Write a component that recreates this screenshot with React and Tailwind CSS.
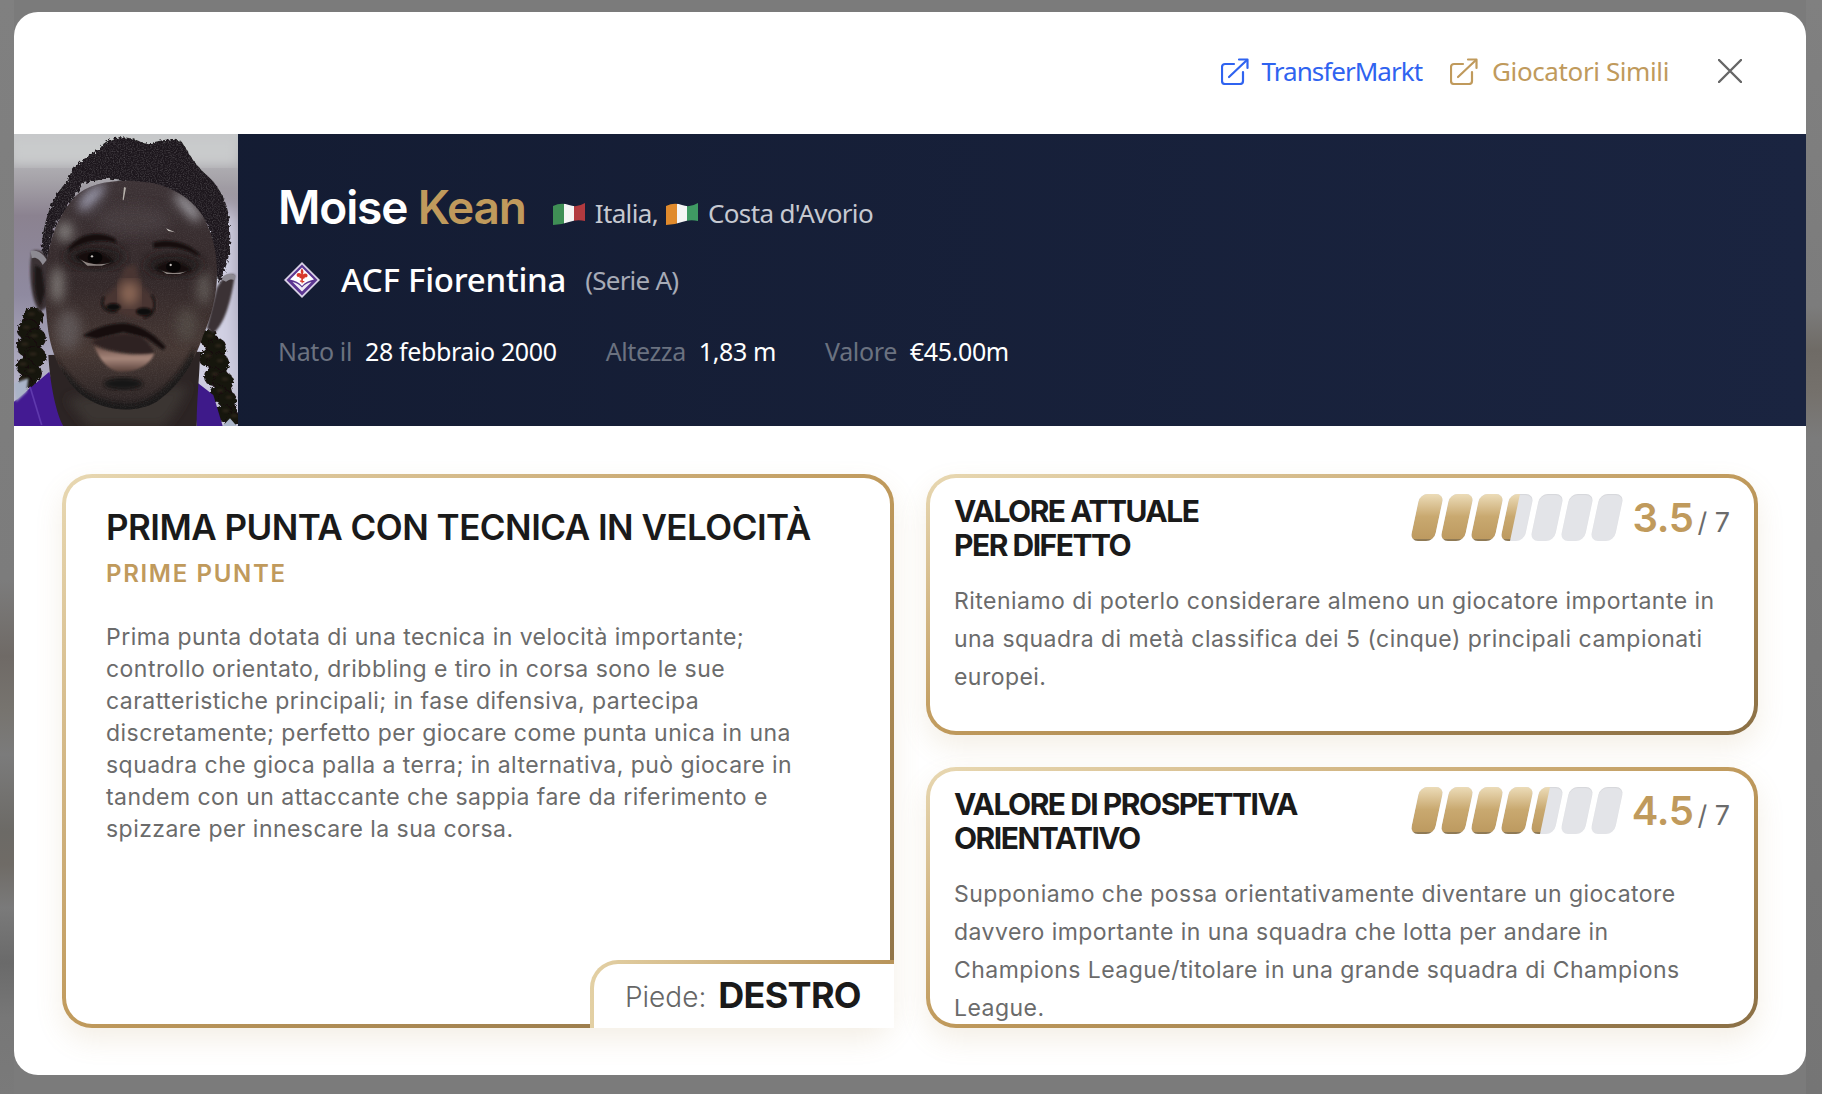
import React from "react";

const headingFont = "font-['Inter',sans-serif]";
const bodyFont = "font-['Inter',sans-serif]";
const navFont = "font-['Noto_Sans',sans-serif]";

const ExternalIcon = ({ className }) => (
  <svg viewBox="0 0 28 27" fill="none" stroke="currentColor" strokeWidth="2.2" strokeLinecap="round" strokeLinejoin="round" className={className}>
    <path d="M13 6H4a3 3 0 0 0-3 3v14a3 3 0 0 0 3 3h15a3 3 0 0 0 3-3v-9" />
    <path d="M8 19 26 2" />
    <path d="M18 1.500h8.500V10" />
  </svg>
);

const Flag = ({ id, colors }) => (
  <svg viewBox="0 0 32 23" className="h-[23px] w-8 shrink-0">
    <clipPath id={id}>
      <path d="M0 4Q8 0 16 3T32 1V19Q24 17 16 20T0 23Z" />
    </clipPath>
    <g clipPath={`url(#${id})`}>
      <rect x="0" y="0" width="11" height="23" fill={colors[0]} />
      <rect x="11" y="0" width="10" height="23" fill={colors[1]} />
      <rect x="21" y="0" width="11" height="23" fill={colors[2]} />
    </g>
  </svg>
);

const ClubLogo = () => (
  <svg viewBox="0 0 36 36" className="h-9 w-9 shrink-0">
    <path d="M18 0 36 18 18 36 0 18Z" fill="#d9d2e6" />
    <path d="M18 2.500 33.500 18 18 33.500 2.500 18Z" fill="#5b3590" />
    <path d="M18 5.500 30 17.500 C25 18.500 21 20 18 24 C15 20 11 18.500 6 17.500Z" fill="#fff" />
    <path d="M18 6.500c1.500 2 2 3.500 .8 6 2-1.800 4.800-1.200 4.800 1 0 1.700-1.600 2.400-2.800 1.600 .4 1.600-.8 1.900-1.800 1.600l-.2 2.300h1.500v1.200h-1.500L18 22l-.6-2.300h-1.500v-1.200h1.500l-.2-2.300c-1 .3-2.200 0-1.800-1.600-1.200 .8-2.800 .1-2.800-1.600 0-2.200 2.800-2.800 4.800-1-1.200-2.500-.7-4 .8-6Z" fill="#d8392b" />
    <path d="M18 25.500c2.500-3 5.500-4.500 9.500-5.500L18 29.500 8.500 20c4 1 7 2.500 9.500 5.500Z" fill="#fff" opacity=".9" />
  </svg>
);

const hairPath =
  "M125 375C128 300 150 220 205 165C215 120 270 90 300 70C325 30 385 28 430 55C470 58 500 30 545 50C570 90 590 125 620 150C665 190 692 250 690 320C695 380 680 430 655 475L625 300 510 192 320 160 250 175 165 300 140 400Z";
const facePath =
  "M140 420C148 340 175 270 225 215C270 170 360 160 440 172C510 180 575 220 610 275C635 320 648 370 650 420C655 490 640 560 610 630C580 720 540 780 470 830C410 865 320 860 260 820C200 780 160 710 145 620C135 550 135 480 140 420Z";

const leftBraid = [[100, 575, 30], [85, 615, 32], [108, 640, 30], [80, 665, 30], [105, 695, 32], [75, 725, 26], [100, 745, 26], [75, 770, 20]];
const rightBraid = [[625, 640, 26], [650, 670, 30], [620, 700, 24], [655, 715, 32], [640, 755, 28], [670, 770, 30], [655, 805, 26], [682, 825, 28], [672, 865, 26], [698, 880, 20]];

// ritratto disegnato: coordinate prese dal crop del riferimento
const Portrait = () => (
  <svg viewBox="42 27 672 876" preserveAspectRatio="none" className="h-full w-full">
    <defs>
      <linearGradient id="bgTone" x1="0" y1="0" x2="0" y2="1">
        <stop offset="0" stopColor="#c4c6c8" />
        <stop offset=".16" stopColor="#a5a2a8" />
        <stop offset=".28" stopColor="#8b8290" />
        <stop offset=".55" stopColor="#8f8aa0" />
        <stop offset="1" stopColor="#c9c8dc" />
      </linearGradient>
      <linearGradient id="skinTone" x1="0" y1="0" x2="0" y2="1">
        <stop offset="0" stopColor="#3d3336" />
        <stop offset=".45" stopColor="#34292a" />
        <stop offset=".75" stopColor="#463834" />
        <stop offset="1" stopColor="#2a2324" />
      </linearGradient>
      <linearGradient id="lipTone" x1="0" y1="0" x2="0" y2="1">
        <stop offset="0" stopColor="#6e524a" />
        <stop offset=".5" stopColor="#a6867a" />
        <stop offset="1" stopColor="#5a423c" />
      </linearGradient>
      <clipPath id="hairClip"><path d={hairPath} /></clipPath>
      <clipPath id="faceClip"><path d={facePath} /></clipPath>
      <filter id="b2"><feGaussianBlur stdDeviation="3" /></filter>
      <filter id="b6"><feGaussianBlur stdDeviation="7" /></filter>
      <filter id="b14"><feGaussianBlur stdDeviation="16" /></filter>
      <filter id="b28"><feGaussianBlur stdDeviation="30" /></filter>
      <filter id="fuzz" x="-10%" y="-10%" width="120%" height="120%">
        <feTurbulence type="fractalNoise" baseFrequency=".12" numOctaves="2" seed="4" />
        <feDisplacementMap in="SourceGraphic" scale="16" />
      </filter>
      <filter id="grain" x="0" y="0" width="100%" height="100%">
        <feTurbulence type="fractalNoise" baseFrequency=".28" numOctaves="2" seed="7" />
        <feColorMatrix values="0 0 0 0 1 0 0 0 0 1 0 0 0 0 1 0 0 0 2.200 -0.900" />
      </filter>
    </defs>
    <rect x="42" y="27" width="672" height="876" fill="url(#bgTone)" />
    <rect x="560" y="250" width="160" height="560" fill="#d2d1e4" filter="url(#b28)" />
    <rect x="30" y="30" width="684" height="90" fill="#c9cbcc" filter="url(#b14)" />

    {/* treccine */}
    <g filter="url(#fuzz)" fill="#17120f">
      <path d="M100 560 85 790" stroke="#17120f" strokeWidth="44" />
      <path d="M625 620 700 900" stroke="#17120f" strokeWidth="44" />
      {leftBraid.map(([x, y, r]) => <circle key={`${x}-${y}`} cx={x} cy={y} r={r} />)}
      {rightBraid.map(([x, y, r]) => <circle key={`${x}-${y}`} cx={x} cy={y} r={r} />)}
    </g>
    <g fill="#4d3a2e" opacity=".4" filter="url(#b2)">
      {leftBraid.map(([x, y]) => <ellipse key={`${x}-${y}`} cx={x - 6} cy={y - 8} rx="11" ry="5" />)}
      {rightBraid.map(([x, y]) => <ellipse key={`${x}-${y}`} cx={x + 5} cy={y - 8} rx="10" ry="5" />)}
    </g>

    {/* maglia */}
    <path d="M42 830 148 740 195 903H42Z" fill="#431a92" />
    <path d="M575 760 640 810 668 903H590Z" fill="#3e1a8a" />
    <path d="M90 785 125 900" stroke="#5f39ad" strokeWidth="5" fill="none" />
    <path d="M42 775 85 760 80 800 48 830Z" fill="#aab4c8" filter="url(#b2)" />
    <path d="M668 903 690 880 710 903Z" fill="#aab4c8" />

    {/* orecchie */}
    <path d="M95 380C85 440 92 530 120 560L150 540 150 400C135 380 110 370 95 380Z" fill="#3a3134" filter="url(#b2)" />
    <path d="M705 450C680 440 660 470 650 490L620 610 640 625C680 590 695 510 705 450Z" fill="#3a3134" filter="url(#b2)" />
    <path d="M92 378C110 372 130 385 140 405L128 420C118 400 105 395 95 400Z" fill="#8d8a92" />
    <path d="M706 452C690 442 672 448 662 462L678 470C688 462 696 462 704 465Z" fill="#8d8a92" />
    <path d="M105 420C100 470 105 520 122 545L135 500 125 430Z" fill="#1e1919" filter="url(#b2)" />

    {/* collo */}
    <path d="M145 690C150 780 170 870 190 903H590C590 820 600 740 600 680Z" fill="#2c2424" />
    <path d="M200 820C230 860 250 885 265 903H490C530 860 550 820 565 780Z" fill="#3a3533" filter="url(#b14)" />

    {/* capelli */}
    <path d={hairPath} fill="#1b191b" filter="url(#fuzz)" />
    <g clipPath="url(#hairClip)">
      <rect x="100" y="20" width="620" height="470" filter="url(#grain)" opacity=".18" />
    </g>

    {/* viso */}
    <path d={facePath} fill="url(#skinTone)" />
    <g clipPath="url(#faceClip)">
      {/* luci pelle */}
      <g filter="url(#b14)">
        <path d="M235 245C245 205 285 180 320 172L300 215 250 262Z" fill="#9e9db0" />
        <path d="M520 200C560 210 590 245 605 285L580 285 535 235Z" fill="#a9a7ad" />
        <ellipse cx="195" cy="320" rx="24" ry="30" fill="#807c7a" />
        <ellipse cx="172" cy="480" rx="20" ry="55" fill="#7a7572" />
        <ellipse cx="612" cy="490" rx="20" ry="50" fill="#5f5855" />
        <ellipse cx="205" cy="615" rx="38" ry="60" fill="#5c5352" />
        <ellipse cx="560" cy="600" rx="32" ry="50" fill="#4f4643" />
        <ellipse cx="400" cy="285" rx="110" ry="45" fill="#443a3e" />
      </g>
      {/* ombre occhi */}
      <ellipse cx="285" cy="395" rx="90" ry="38" fill="#1a1516" filter="url(#b14)" opacity=".8" />
      <ellipse cx="520" cy="420" rx="85" ry="36" fill="#1a1516" filter="url(#b14)" opacity=".8" />
      {/* barba */}
      <path d="M165 690C220 790 300 840 400 835C470 825 540 750 585 660L575 820C480 880 320 890 220 840Z" fill="#151212" filter="url(#b6)" opacity=".8" />
      <rect x="120" y="150" width="560" height="720" filter="url(#grain)" opacity=".06" />
    </g>
    <path d="M372 186 378 188 371 226 368 224Z" fill="#b7b2ac" />
    <path d="M498 310 525 322 505 318Z" fill="#c9c4c0" />

    {/* sopracciglia */}
    <g filter="url(#b2)" fill="#14100f">
      <path d="M205 370C240 325 290 315 345 340L350 355C300 340 250 350 205 380Z" />
      <path d="M460 352C500 342 560 345 600 390L590 392C550 365 500 365 460 370Z" />
    </g>
    {/* occhi */}
    <g filter="url(#b2)">
      <path d="M228 395C255 370 305 370 340 410C305 425 255 425 228 395Z" fill="#120e0d" />
      <path d="M465 430C490 405 540 400 575 435C540 450 490 450 465 430Z" fill="#120e0d" />
    </g>
    <ellipse cx="285" cy="398" rx="22" ry="18" fill="#070505" />
    <ellipse cx="520" cy="425" rx="22" ry="17" fill="#070505" />
    <path d="M240 402C262 420 310 422 335 412L305 422H262Z" fill="#8e8582" />
    <path d="M478 432C495 446 540 448 568 436L540 447H500Z" fill="#8e8582" />
    <circle cx="276" cy="394" r="3.500" fill="#c9c4c0" />
    <circle cx="512" cy="420" r="3.500" fill="#c9c4c0" />

    {/* naso */}
    <path d="M375 425C360 470 345 495 315 512C298 540 318 566 350 560C380 575 410 585 440 575C472 568 472 530 452 508C425 490 410 450 408 420Z" fill="#4a3630" filter="url(#b6)" />
    <ellipse cx="388" cy="505" rx="30" ry="38" fill="#8a6655" filter="url(#b14)" />
    <path d="M312 515C296 545 320 566 352 558" fill="none" stroke="#151010" strokeWidth="6" filter="url(#b2)" />
    <path d="M455 510C475 540 462 572 430 578" fill="none" stroke="#151010" strokeWidth="6" filter="url(#b2)" />
    <ellipse cx="340" cy="546" rx="22" ry="11" fill="#0d0908" filter="url(#b2)" />
    <ellipse cx="432" cy="560" rx="24" ry="12" fill="#0d0908" filter="url(#b2)" />

    {/* baffi e labbra */}
    <path d="M248 632C290 606 340 590 385 596C430 604 468 632 497 665L490 676 440 640 370 622 290 642Z" fill="#151111" filter="url(#b2)" />
    <path d="M275 652C315 628 380 622 420 634C440 646 455 665 463 684C400 692 320 678 275 652Z" fill="#2f2321" filter="url(#b2)" />
    <path d="M282 662C325 684 400 695 464 685C448 722 410 742 360 740C322 736 298 700 282 662Z" fill="url(#lipTone)" filter="url(#b2)" />
    <ellipse cx="370" cy="776" rx="58" ry="18" fill="#181313" filter="url(#b6)" />
  </svg>
);

const Rating = ({ value }) => (
  <div className="flex items-center">
    <div className="flex gap-[6px] pl-[5px] pr-1">
      {[0, 1, 2, 3, 4, 5, 6].map((i) => {
        const fill = Math.min(Math.max(value - i, 0), 1);
        return (
          <div key={i} className="relative h-[47px] w-6 -skew-x-[12deg] overflow-hidden rounded-lg bg-[#e3e4e8] shadow-[inset_0_1px_1px_rgba(0,0,0,0.06)]">
            <div
              className="absolute inset-y-0 left-0 border-b-2 border-[#8f7a55] bg-linear-to-b from-[#ecdcb8] via-[#c9a970] to-[#bd9a60]"
              style={{ width: `${fill === 1 ? 100 : fill * 80}%` }}
            />
          </div>
        );
      })}
    </div>
    <span className={`${headingFont} ml-[9px] text-[40px] leading-none font-semibold tracking-[-0.01em] text-[#c09a5c]`}>{value.toFixed(1)}</span>
    <span className={`${bodyFont} mt-[10px] ml-1 text-[27px] leading-none text-[#6b6b6b]`}>/ 7</span>
  </div>
);

const GoldCard = ({ className, children }) => (
  <div className={`relative rounded-[30px] bg-linear-to-br from-[#e8d8b2] via-[#c09a5c] to-[#8a6f45] p-1 shadow-[0_12px_28px_rgba(176,140,80,0.14)] ${className}`}>
    {children}
  </div>
);

const ValueCard = ({ title, value, text }) => (
  <GoldCard className="h-[261px]">
    <div className="h-full overflow-hidden rounded-[26px] bg-white px-6 pt-4">
      <div className="flex items-start justify-between">
        <h3 className={`${headingFont} w-[370px] text-[30px] leading-[34px] font-bold tracking-[-0.05em] text-[#1a1a1a]`}>{title}</h3>
        <Rating value={value} />
      </div>
      <p className={`${bodyFont} mt-5 text-[23px] leading-[38px] tracking-[0.02em] text-[#6b6b6b]`}>{text}</p>
    </div>
  </GoldCard>
);

export default function App() {
  return (
    <div className="relative flex h-[1094px] w-full overflow-hidden bg-[#7b7b7b] pt-3 pr-4 pb-[19px] pl-[14px]">
      <div className="absolute inset-y-0 left-0 w-[14px] bg-[linear-gradient(to_bottom,#808080_0%,#7c7c7c_53%,#6f6a66_60%,#77746f_65%,#7b7b7b_69%,#6c6a66_76%,#6f6b66_79%,#7a7a7a_83%,#6a6a6a_88%,#777777_93%,#7a7a7a_100%)]" />
      <div className="absolute inset-y-0 right-0 w-4 bg-[linear-gradient(to_bottom,#808080_0%,#7c7c7c_28%,#6f6b66_32%,#75716c_36%,#7b7b7b_40%,#757575_100%)]" />

      <div className="relative flex h-[1063px] w-full flex-col overflow-hidden rounded-[24px] bg-white">
        <div className="flex h-[122px] shrink-0 items-center justify-end pr-16 pb-1">
          <a className={`${navFont} flex items-center text-[26px] tracking-[-0.037em] text-[#2f63f0]`}>
            <ExternalIcon className="mr-[13px] h-[27px] w-7" />
            TransferMarkt
          </a>
          <a className={`${navFont} ml-7 flex items-center text-[26px] tracking-[-0.015em] text-[#c09a5c]`}>
            <ExternalIcon className="mr-[14px] h-[27px] w-7" />
            Giocatori Simili
          </a>
          <button className="ml-[49px] text-[#666666]">
            <svg viewBox="0 0 24 24" fill="none" stroke="currentColor" strokeWidth="2.4" strokeLinecap="round" className="h-6 w-6">
              <path d="M1 1 23 23M23 1 1 23" />
            </svg>
          </button>
        </div>

        <div className="flex h-[292px] shrink-0 bg-linear-to-r from-[#131b31] to-[#1a2440]">
          <div className="h-full w-[224px] shrink-0">
            <Portrait />
          </div>
          <div className="pt-[45px] pl-10">
            <div className="flex items-end">
              <h2 className={`${headingFont} text-[46px] leading-[56px] font-semibold tracking-[-0.025em] text-white`}>
                Moise <span className="text-[#c09a5c]">Kean</span>
              </h2>
              <div className={`${navFont} mb-[2px] ml-[27px] flex items-center text-[26px] tracking-[-0.025em] text-[#c6c9d1]`}>
                <Flag id="flag-it" colors={["#3f8f55", "#f5f5f5", "#b23a3f"]} />
                <span className="ml-[10px]">Italia,</span>
                <span className="ml-2"><Flag id="flag-ci" colors={["#e08a2c", "#f5f5f5", "#3f9a63"]} /></span>
                <span className="ml-[10px]">Costa d'Avorio</span>
              </div>
            </div>
            <div className="mt-[23px] flex items-center pl-[6px]">
              <ClubLogo />
              <span className={`${navFont} ml-[21px] text-[33px] leading-[44px] font-medium tracking-[-0.007em] text-white`}>ACF Fiorentina</span>
              <span className={`${navFont} ml-[19px] text-[26px] tracking-[-0.03em] text-[#a7abb6]`}>(Serie A)</span>
            </div>
            <div className={`${navFont} mt-[31px] flex text-[25px] leading-[36px] tracking-[-0.015em]`}>
              <span className="text-[#6b7280]">Nato il</span>
              <span className="ml-[13px] text-white">28 febbraio 2000</span>
              <span className="ml-[49px] text-[#6b7280]">Altezza</span>
              <span className="ml-[13px] text-white">1,83 m</span>
              <span className="ml-[49px] text-[#6b7280]">Valore</span>
              <span className="ml-[13px] text-white">€45.00m</span>
            </div>
          </div>
        </div>

        <div className="grid flex-1 grid-cols-2 gap-8 px-12 pt-12 pb-[47px]">
          <GoldCard className="h-[554px]">
            <div className="h-full rounded-[26px] bg-white px-10 pt-[27px]">
              <h3 className={`${headingFont} text-[35px] leading-[44px] font-semibold tracking-[-0.015em] text-[#1a1a1a]`}>
                PRIMA PUNTA CON TECNICA IN VELOCITÀ
              </h3>
              <div className={`${headingFont} mt-[9px] text-[24px] leading-[32px] font-semibold tracking-[0.07em] text-[#c09a5c]`}>
                PRIME PUNTE
              </div>
              <p className={`${bodyFont} mt-[31px] w-[720px] text-[23px] leading-[32px] tracking-[0.02em] text-[#6b6b6b]`}>
                Prima punta dotata di una tecnica in velocità importante; controllo orientato, dribbling e tiro in corsa sono le sue caratteristiche principali; in fase difensiva, partecipa discretamente; perfetto per giocare come punta unica in una squadra che gioca palla a terra; in alternativa, può giocare in tandem con un attaccante che sappia fare da riferimento e spizzare per innescare la sua corsa.
              </p>
            </div>
            <div className="absolute right-0 bottom-0 h-[68px] w-[304px] rounded-tl-[28px] bg-linear-to-r from-[#e3d0a4] to-[#b8945a] pt-1 pl-1">
              <div className="flex h-full items-center rounded-tl-[24px] bg-white pb-[3px] pl-[31px]">
                <span className={`${bodyFont} mt-[5px] text-[28px] font-light text-[#666666]`}>Piede:</span>
                <span className={`${headingFont} ml-3 text-[36px] leading-none font-bold tracking-[-0.02em] text-[#1a1a1a]`}>DESTRO</span>
              </div>
            </div>
          </GoldCard>

          <div className="flex flex-col gap-8">
            <ValueCard
              title={<>VALORE ATTUALE<br />PER DIFETTO</>}
              value={3.5}
              text="Riteniamo di poterlo considerare almeno un giocatore importante in una squadra di metà classifica dei 5 (cinque) principali campionati europei."
            />
            <ValueCard
              title={<>VALORE DI PROSPETTIVA<br />ORIENTATIVO</>}
              value={4.5}
              text="Supponiamo che possa orientativamente diventare un giocatore davvero importante in una squadra che lotta per andare in Champions League/titolare in una grande squadra di Champions League."
            />
          </div>
        </div>
      </div>
    </div>
  );
}
